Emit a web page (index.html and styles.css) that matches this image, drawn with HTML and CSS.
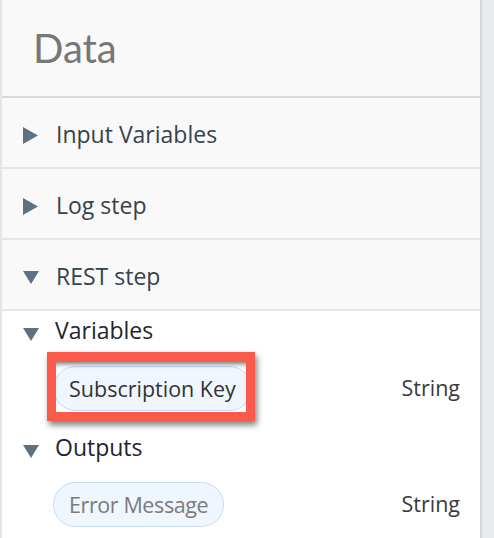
FILE: index.html
```html
<!DOCTYPE html>
<html>
<head>
<meta charset="utf-8">
<link rel="stylesheet" href="styles.css">
</head>
<body>
<div class="panel">
  <div class="header"><h1 class="title">Data</h1></div>
  <div class="row">
    <svg class="tri-right" width="15" height="17" viewBox="0 0 15 17"><polygon points="0,0 15,8.5 0,17" fill="#5e7183"/></svg>
    <span class="row-label">Input Variables</span>
  </div>
  <div class="row">
    <svg class="tri-right" width="15" height="17" viewBox="0 0 15 17"><polygon points="0,0 15,8.5 0,17" fill="#5e7183"/></svg>
    <span class="row-label">Log step</span>
  </div>
  <div class="row">
    <svg class="tri-down" width="16" height="13" viewBox="0 0 16 13"><polygon points="0,0 16,0 8,13" fill="#5e7183"/></svg>
    <span class="row-label">REST step</span>
  </div>
  <div class="lower">
    <div class="subhead">
      <svg class="tri-down" width="16" height="13" viewBox="0 0 16 13"><polygon points="0,0 16,0 8,13" fill="#5e7183"/></svg>
      <span class="sub-label">Variables</span>
    </div>
    <div class="item">
      <div class="chip-wrap">
        <span class="chip chip-dark">Subscription Key</span>
        <span class="highlight"></span>
      </div>
      <span class="type">String</span>
    </div>
    <div class="subhead">
      <svg class="tri-down" width="16" height="13" viewBox="0 0 16 13"><polygon points="0,0 16,0 8,13" fill="#5e7183"/></svg>
      <span class="sub-label">Outputs</span>
    </div>
    <div class="item">
      <div class="chip-wrap">
        <span class="chip chip-grey">Error Message</span>
      </div>
      <span class="type">String</span>
    </div>
  </div>
</div>
</body>
</html>
```
FILE: styles.css
```css
html, body {
  margin: 0;
  padding: 0;
}
body {
  background: #e9eaec;
  font-family: "Open Sans", "Lato", sans-serif;
  width: 494px;
  height: 538px;
  overflow: hidden;
}
.panel {
  width: 478px;
  height: 538px;
  background: #ffffff;
  border-left: 2px solid #e3e6e9;
  border-right: 2px solid #d2d5d9;
}
.header {
  height: 96px;
  background: #f9f9f9;
  border-bottom: 2px solid #d5d8dc;
}
.title {
  margin: 0;
  padding: 24px 0 0 31px;
  font-family: "Lato", sans-serif;
  font-weight: 400;
  font-size: 40px;
  line-height: 48px;
  color: #777777;
}
.row {
  height: 69px;
  background: #f9f9f9;
  border-bottom: 2px solid #e4e6e9;
  display: flex;
  align-items: center;
  padding-left: 21px;
}
.row .row-label {
  font-size: 23px;
  line-height: 30px;
  color: #36424e;
  margin-left: 18px;
  padding-top: 2px;
}
.row .tri-down + .row-label {
  margin-left: 17px;
}
.tri-right, .tri-down {
  flex: none;
  display: block;
}
.row .tri-right,
.row .tri-down {
  margin-top: 6px;
}
.lower {
  padding-top: 5px;
}
.subhead {
  height: 28px;
  display: flex;
  align-items: center;
  padding-left: 21px;
}
.subhead .tri-down {
  margin-top: 8px;
}
.sub-label {
  font-size: 23px;
  line-height: 28px;
  color: #1f262d;
  margin-left: 16px;
}
.item {
  display: flex;
  align-items: center;
  justify-content: space-between;
  padding-left: 51px;
  padding-right: 20px;
  margin: 22px 0 22px;
}
.item:last-child {
  margin-bottom: 0;
  margin-top: 21px;
}
.chip-wrap {
  position: relative;
  display: flex;
}
.chip {
  display: inline-block;
  height: 43px;
  line-height: 43px;
  padding: 0 15px;
  border: 1.5px solid #c4dcf4;
  border-radius: 24px;
  background: #f0f6fd;
  font-size: 21.5px;
  white-space: nowrap;
}
.chip-dark {
  color: #333333;
}
.chip-grey {
  color: #7b7b7b;
  letter-spacing: -0.4px;
}
.type {
  font-size: 21.5px;
  color: #3a3a3a;
  margin-top: -2px;
}
.highlight {
  position: absolute;
  left: -6px;
  top: -14px;
  right: -3px;
  bottom: -10px;
  border: 9px solid #f95a4b;
  box-shadow: 2px 4px 6px rgba(0, 0, 0, 0.5), inset 0 6px 5px -3px rgba(0, 0, 0, 0.55);
}
```
